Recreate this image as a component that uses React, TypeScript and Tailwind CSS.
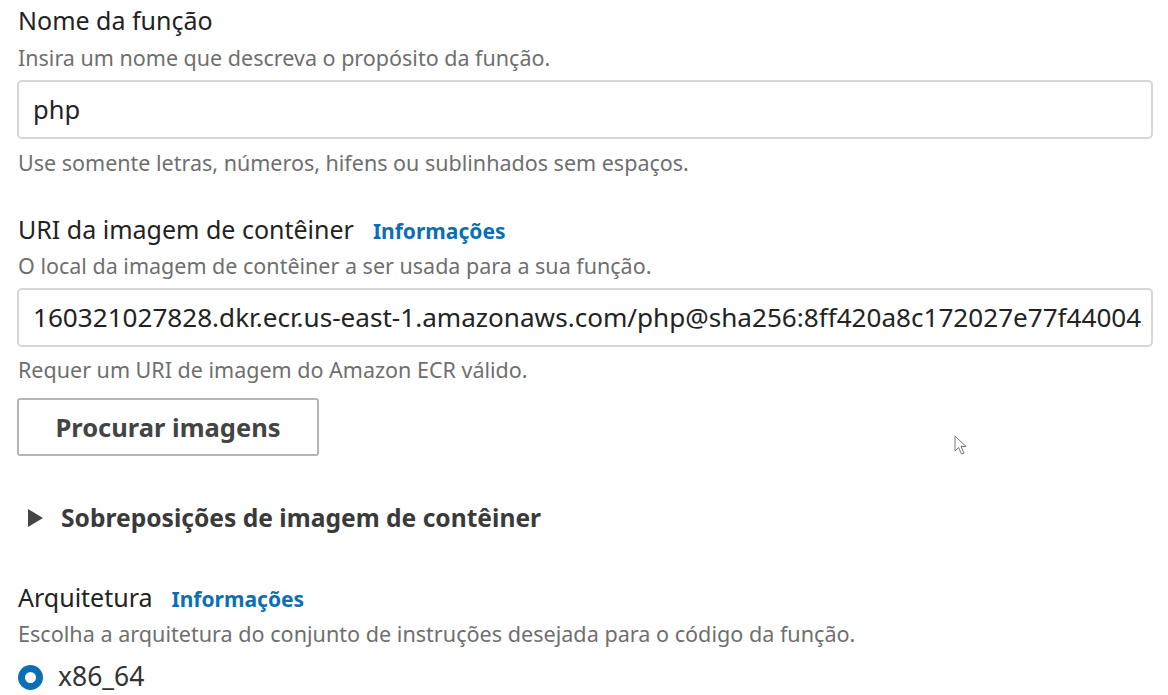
import React from "react";

const font = { fontFamily: '"Noto Sans", "Open Sans", sans-serif' };

function Info() {
  return <span className="ml-[19px] text-[21px] font-bold text-[#0a6fb5]">Informações</span>;
}

export default function App() {
  return (
    <div className="relative w-[1168px] h-[695px] bg-white overflow-hidden" style={font}>
      <div className="pl-[18px] pr-[15px] pt-[5px] flex flex-col">
        <div className="text-[25px] leading-[30px] text-[#232323] whitespace-nowrap">Nome da função</div>
        <div className="mt-[9px] text-[21.5px] leading-[28px] text-[#6f6f6f] whitespace-nowrap">Insira um nome que descreva o propósito da função.</div>
        <div className="mt-[8px] -ml-px h-[59px] border-2 border-[#d6d6d6] rounded-[5px] flex items-center px-[14px] text-[25.5px] text-[#232323]">php</div>
        <div className="mt-[10px] text-[21.5px] leading-[28px] text-[#6f6f6f] whitespace-nowrap">Use somente letras, números, hifens ou sublinhados sem espaços.</div>

        <div className="mt-[37px] flex items-baseline text-[25px] leading-[30px] text-[#232323] whitespace-nowrap">URI da imagem de contêiner<Info /></div>
        <div className="mt-[6px] text-[21.5px] leading-[28px] text-[#6f6f6f] whitespace-nowrap">O local da imagem de contêiner a ser usada para a sua função.</div>
        <div className="mt-[8px] -ml-px h-[59px] border-2 border-[#d6d6d6] rounded-[5px] flex items-center pl-[14px] pr-[8px]">
          <div className="flex-1 min-w-0 overflow-hidden whitespace-nowrap text-[26.1px] text-[#232323]">160321027828.dkr.ecr.us-east-1.amazonaws.com/php@sha256:8ff420a8c172027e77f4400451</div>
        </div>
        <div className="mt-[9px] text-[21.5px] leading-[28px] text-[#6f6f6f] whitespace-nowrap">Requer um URI de imagem do Amazon ECR válido.</div>
        <div className="mt-[14px] -ml-px w-[302px] h-[58px] shrink-0 border-2 border-[#b5b5b5] rounded-[3px] flex items-center justify-center text-[25.5px] font-bold text-[#444]">Procurar imagens</div>

        <div className="mt-[47px] flex items-center ml-[10px] h-[30px] text-[24.6px] font-bold text-[#3a3a3a] whitespace-nowrap">
          <svg width="15" height="18" viewBox="0 0 15 18" className="mr-[18px]"><path d="M0 0 L15 9 L0 18 Z" fill="#454545" /></svg>
          Sobreposições de imagem de contêiner
        </div>

        <div className="mt-[49px] flex items-baseline text-[25px] leading-[30px] text-[#232323] whitespace-nowrap">Arquitetura<Info /></div>
        <div className="mt-[6px] text-[21.6px] leading-[28px] text-[#6f6f6f] whitespace-nowrap">Escolha a arquitetura do conjunto de instruções desejada para o código da função.</div>
        <div className="mt-[16px] flex items-center h-[26px]">
          <div className="w-[25px] h-[25px] rounded-full border-[7px] border-[#0a6fb5] bg-white" />
          <span className="ml-[15px] text-[26.5px] text-[#333]">x86_64</span>
        </div>
      </div>
      <svg className="absolute left-[954px] top-[435px]" width="14" height="21" viewBox="0 0 14 21">
        <path d="M1 1 L1 16 L4.5 12.5 L7.5 19 L10 18 L7 11.5 L12 11.5 Z" fill="#fff" stroke="#777" strokeWidth="1" strokeLinejoin="round" />
      </svg>
    </div>
  );
}
